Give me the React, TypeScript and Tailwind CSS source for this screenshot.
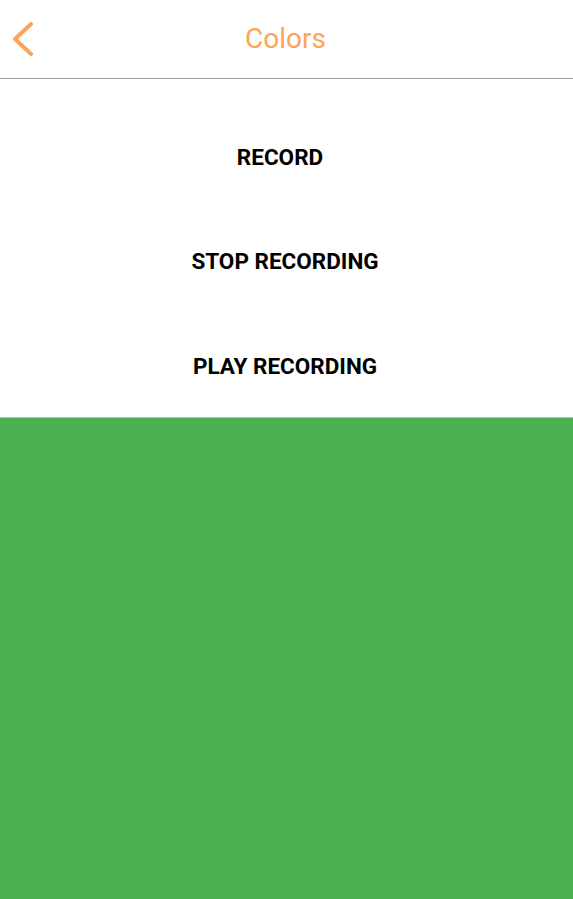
import React from "react";

export default function App() {
  return (
    <div className="w-[573px] h-[899px] flex flex-col bg-white" style={{ fontFamily: "Roboto, 'Liberation Sans', sans-serif" }}>
      <div className="relative h-[79px] flex items-center justify-center border-b border-[#9a9a9a] shrink-0">
        <svg className="absolute left-[11px] top-[22px]" width="24" height="34" viewBox="0 0 24 34">
          <polyline points="20,2 4,17 20,32" fill="none" stroke="#ffa356" strokeWidth="4" strokeLinecap="round" strokeLinejoin="round" />
        </svg>
        <span className="text-[28px] text-[#ffa356] ml-[-2px]">Colors</span>
      </div>
      <div className="flex flex-col pt-[27px] shrink-0">
        <div className="h-[104px] flex items-center justify-center pr-[13px]">
          <span className="text-[22.5px] font-bold text-black">RECORD</span>
        </div>
        <div className="h-[104px] flex items-center justify-center pr-[3px]">
          <span className="text-[22.5px] font-bold text-black">STOP RECORDING</span>
        </div>
        <div className="h-[103px] flex items-center justify-center pr-[3px] pt-[2px]">
          <span className="text-[22.5px] font-bold text-black">PLAY RECORDING</span>
        </div>
      </div>
      <div className="flex-1 bg-[#4caf50] border-t border-[#9fd19f]" />
    </div>
  );
}
